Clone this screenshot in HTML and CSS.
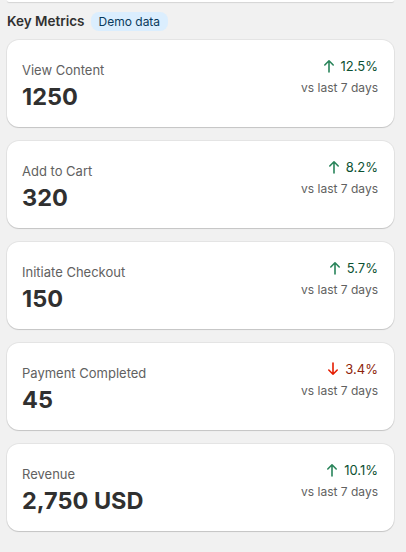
FILE: index.html
```html
<!DOCTYPE html>
<html lang="en">
<head>
<meta charset="UTF-8">
<meta name="viewport" content="width=device-width, initial-scale=1.0">
<title>Key Metrics</title>
<link rel="stylesheet" href="styles.css">
</head>
<body>
<div class="page">
  <div class="prev-card"></div>

  <div class="heading">
    <h2>Key Metrics</h2>
    <span class="badge">Demo data</span>
  </div>

  <div class="metrics">
    <div class="card">
      <div class="card-left">
        <p class="label">View Content</p>
        <p class="value">1250</p>
      </div>
      <div class="card-right">
        <p class="change up">
          <svg class="arrow" viewBox="0 0 20 20" width="20" height="20"><path d="M10 16V4.8M5.8 9 10 4.8 14.2 9" fill="none" stroke="currentColor" stroke-width="1.6" stroke-linecap="round" stroke-linejoin="round"/></svg>
          <span>12.5%</span>
        </p>
        <p class="period">vs last 7 days</p>
      </div>
    </div>

    <div class="card">
      <div class="card-left">
        <p class="label">Add to Cart</p>
        <p class="value">320</p>
      </div>
      <div class="card-right">
        <p class="change up">
          <svg class="arrow" viewBox="0 0 20 20" width="20" height="20"><path d="M10 16V4.8M5.8 9 10 4.8 14.2 9" fill="none" stroke="currentColor" stroke-width="1.6" stroke-linecap="round" stroke-linejoin="round"/></svg>
          <span>8.2%</span>
        </p>
        <p class="period">vs last 7 days</p>
      </div>
    </div>

    <div class="card">
      <div class="card-left">
        <p class="label">Initiate Checkout</p>
        <p class="value">150</p>
      </div>
      <div class="card-right">
        <p class="change up">
          <svg class="arrow" viewBox="0 0 20 20" width="20" height="20"><path d="M10 16V4.8M5.8 9 10 4.8 14.2 9" fill="none" stroke="currentColor" stroke-width="1.6" stroke-linecap="round" stroke-linejoin="round"/></svg>
          <span>5.7%</span>
        </p>
        <p class="period">vs last 7 days</p>
      </div>
    </div>

    <div class="card">
      <div class="card-left">
        <p class="label">Payment Completed</p>
        <p class="value">45</p>
      </div>
      <div class="card-right">
        <p class="change down">
          <svg class="arrow" viewBox="0 0 20 20" width="20" height="20"><path d="M10 4v11.2M5.8 11 10 15.2 14.2 11" fill="none" stroke="currentColor" stroke-width="1.6" stroke-linecap="round" stroke-linejoin="round"/></svg>
          <span>3.4%</span>
        </p>
        <p class="period">vs last 7 days</p>
      </div>
    </div>

    <div class="card">
      <div class="card-left">
        <p class="label">Revenue</p>
        <p class="value">2,750 USD</p>
      </div>
      <div class="card-right">
        <p class="change up">
          <svg class="arrow" viewBox="0 0 20 20" width="20" height="20"><path d="M10 16V4.8M5.8 9 10 4.8 14.2 9" fill="none" stroke="currentColor" stroke-width="1.6" stroke-linecap="round" stroke-linejoin="round"/></svg>
          <span>10.1%</span>
        </p>
        <p class="period">vs last 7 days</p>
      </div>
    </div>
  </div>
</div>
</body>
</html>
```

FILE: styles.css
```css
body {
  margin: 0;
  padding: 0;
  background-color: #f1f1f1;
  font-family: Inter, "Noto Sans", sans-serif;
  color: #303030;
  -webkit-font-smoothing: antialiased;
}
p {
  margin: 0;
}
.page {
  padding: 0 12px 0 7px;
}
.prev-card {
  height: 2px;
  background: #fff;
  border-radius: 0 0 12px 12px;
  box-shadow: 0 1px 1px rgba(0, 0, 0, 0.12);
}
.heading {
  display: flex;
  align-items: center;
  gap: 6px;
  margin-top: 9px;
  height: 20px;
}
.heading h2 {
  margin: 0;
  font-size: 13.5px;
  font-weight: 600;
  color: #303030;
}
.badge {
  background: #dbeefe;
  color: #0a3a5c;
  font-size: 12px;
  line-height: 19px;
  padding: 0 8px;
  border-radius: 8px;
}
.metrics {
  display: flex;
  flex-direction: column;
  gap: 14px;
  margin-top: 9px;
  padding-bottom: 20px;
}
.card {
  display: flex;
  justify-content: space-between;
  align-items: flex-start;
  height: 87px;
  box-sizing: border-box;
  padding: 16px 16px 16px 15px;
  background: #fff;
  border-radius: 12px;
  box-shadow: 0 0 0 1px rgba(0, 0, 0, 0.05), 0 1px 1px rgba(0, 0, 0, 0.14);
}
.card-left {
  padding-top: 4px;
}
.label {
  font-size: 13px;
  line-height: 20px;
  color: #616161;
}
.value {
  margin-top: 2px;
  font-size: 23.5px;
  font-weight: 650;
  line-height: 30px;
  color: #303030;
}
.card-right {
  display: flex;
  flex-direction: column;
  align-items: flex-end;
}
.change {
  display: flex;
  align-items: center;
  gap: 2px;
  font-size: 13px;
  line-height: 20px;
}
.change.up {
  color: #0c5132;
}
.change.up .arrow {
  color: #29845a;
}
.change.down {
  color: #8e1f0b;
}
.change.down .arrow {
  color: #e51c00;
}
.period {
  margin-top: 2px;
  font-size: 12px;
  line-height: 20px;
  color: #616161;
}
```
